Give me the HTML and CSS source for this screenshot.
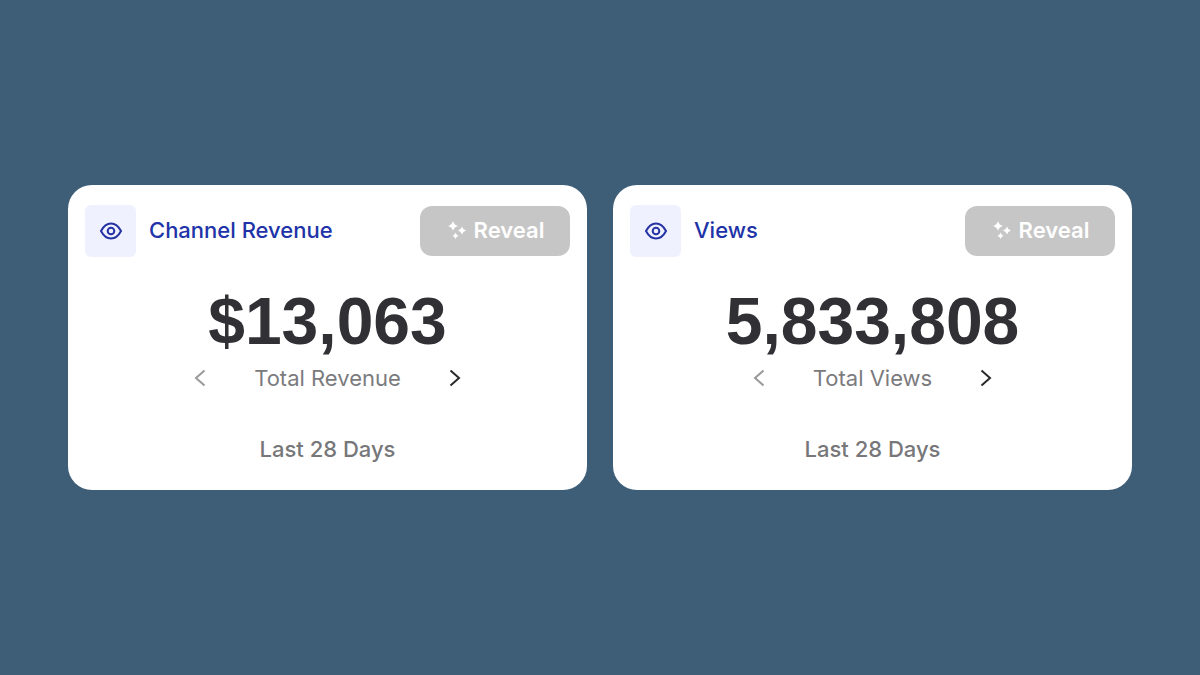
FILE: index.html
```html
<!DOCTYPE html>
<html lang="en">
<head>
<meta charset="utf-8">
<meta name="viewport" content="width=device-width, initial-scale=1">
<title>Channel stats</title>
<link rel="stylesheet" href="styles.css">
</head>
<body>
<svg class="sprite" aria-hidden="true">
  <symbol id="eye" viewBox="0 0 24 20"><path d="M2 10C4.500 5.200 7.900 2.500 12 2.500S19.500 5.200 22 10C19.500 14.800 16.100 17.500 12 17.500S4.500 14.800 2 10Z"/><circle cx="12" cy="10" r="3.300"/></symbol>
  <symbol id="sparkles" viewBox="0 0 18 18"><path d="M5 0Q5.900 4.100 10 5Q5.900 5.900 5 10Q4.100 5.900 0 5Q4.100 4.100 5 0ZM14 5.500Q14.800 8.700 18 9.500Q14.800 10.300 14 13.500Q13.200 10.300 10 9.500Q13.200 8.700 14 5.500ZM7.500 11.500Q8.200 14 10.700 14.700Q8.200 15.400 7.500 18Q6.800 15.400 4.300 14.700Q6.800 14 7.500 11.500Z"/></symbol>
  <symbol id="prev" viewBox="0 0 12 18"><path d="M10.500 1.500L2 9L10.500 16.500"/></symbol>
  <symbol id="next" viewBox="0 0 12 18"><path d="M1.500 1.500L10 9L1.500 16.500"/></symbol>
</svg>
<main class="cards">
  <section class="card">
    <header class="card-header">
      <span class="badge"><svg class="eye" aria-hidden="true"><use href="#eye"/></svg></span>
      <h2 class="title">Channel Revenue</h2>
      <button class="reveal" type="button"><svg class="sparkles" aria-hidden="true"><use href="#sparkles"/></svg>Reveal</button>
    </header>
    <p class="value">$13,063</p>
    <div class="pager">
      <button class="arrow arrow-muted" type="button" aria-label="Previous metric"><svg class="chevron"><use href="#prev"/></svg></button>
      <span class="metric">Total Revenue</span>
      <button class="arrow" type="button" aria-label="Next metric"><svg class="chevron"><use href="#next"/></svg></button>
    </div>
    <p class="period">Last 28 Days</p>
  </section>
  <section class="card">
    <header class="card-header">
      <span class="badge"><svg class="eye" aria-hidden="true"><use href="#eye"/></svg></span>
      <h2 class="title">Views</h2>
      <button class="reveal" type="button"><svg class="sparkles" aria-hidden="true"><use href="#sparkles"/></svg>Reveal</button>
    </header>
    <p class="value">5,833,808</p>
    <div class="pager">
      <button class="arrow arrow-muted" type="button" aria-label="Previous metric"><svg class="chevron"><use href="#prev"/></svg></button>
      <span class="metric">Total Views</span>
      <button class="arrow" type="button" aria-label="Next metric"><svg class="chevron"><use href="#next"/></svg></button>
    </div>
    <p class="period">Last 28 Days</p>
  </section>
</main>
</body>
</html>
```
FILE: styles.css
```css
* {
  box-sizing: border-box;
}

body {
  margin: 0;
  min-height: 100vh;
  display: flex;
  align-items: center;
  background: #3e5d76;
  font-family: Inter, "Liberation Sans", sans-serif;
}

.sprite {
  position: absolute;
  width: 0;
  height: 0;
}

.cards {
  flex: 1;
  display: grid;
  grid-template-columns: 1fr 1fr;
  gap: 26px;
  padding: 0 68px;
}

.card {
  padding: 20px 17px 27px;
  border-radius: 24px;
  background: #fff;
}

.card-header {
  display: flex;
  align-items: center;
  gap: 13px;
}

.badge {
  display: flex;
  align-items: center;
  justify-content: center;
  width: 51px;
  height: 52px;
  border-radius: 6px;
  background: #eff1ff;
}

.eye {
  width: 24px;
  height: 20px;
  fill: none;
  stroke: #2532a4;
  stroke-width: 2;
}

.title {
  flex: 1;
  margin: 0;
  padding-bottom: 2px;
  color: #2133a8;
  font-size: 22px;
  font-weight: 500;
  line-height: 28px;
}

.reveal {
  display: flex;
  align-items: center;
  justify-content: center;
  gap: 8px;
  width: 150px;
  height: 50px;
  padding: 0 0 2px 2px;
  border: 0;
  border-radius: 12px;
  background: #c6c6c6;
  color: #fff;
  font: 600 22px/28px Inter, sans-serif;
}

.sparkles {
  width: 18px;
  height: 18px;
  fill: currentColor;
}

.value {
  margin: 26px 0 0;
  color: #303035;
  font: 700 66px/76px "Liberation Sans", Arial, sans-serif;
  text-align: center;
}

.pager {
  display: flex;
  align-items: center;
  justify-content: center;
  gap: 48px;
}

.arrow {
  display: flex;
  padding: 0;
  border: 0;
  background: none;
  color: #29292c;
}

.arrow-muted {
  color: #99999b;
}

.chevron {
  width: 12px;
  height: 18px;
  fill: none;
  stroke: currentColor;
  stroke-width: 2;
}

.metric {
  color: #7b7b7e;
  font-size: 22px;
  line-height: 38px;
}

.period {
  margin: 38px 0 0;
  color: #77777a;
  font-size: 22px;
  font-weight: 500;
  line-height: 28px;
  text-align: center;
}
```
